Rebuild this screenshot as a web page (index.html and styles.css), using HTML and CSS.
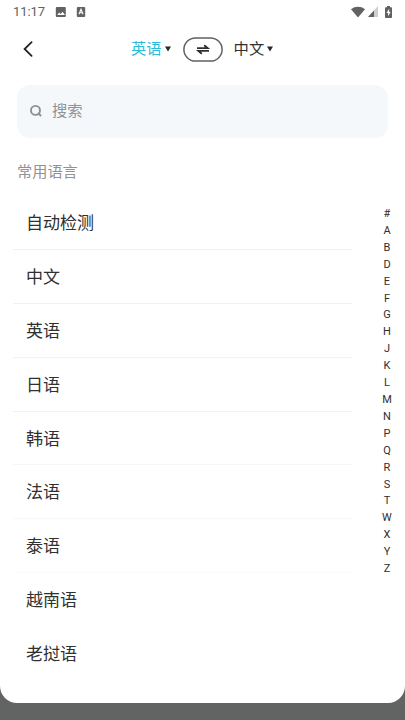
FILE: index.html
```html
<!DOCTYPE html>
<html lang="zh-CN">
<head>
<meta charset="utf-8">
<title>选择语言</title>
<link rel="stylesheet" href="styles.css">
</head>
<body>
<main class="sheet">
  <div class="status">
    <span class="time">11:17</span>
    <svg class="picture" width="12" height="12" viewBox="0 0 12 12"><rect x=".8" y="1" width="10" height="10" rx="1" fill="#626262"/><path d="M2.2 9l2-2.6 1.5 1.7L7.6 5.8 10 9z" fill="#fff"/></svg>
    <svg class="input-mode" width="10" height="12" viewBox="0 0 10 12"><rect x=".8" y="1" width="8.4" height="10" rx="1" fill="#626262"/><path d="M3 8.3L5 3.3l2.1 5M3.7 6.7h2.7" fill="none" stroke="#fff" stroke-width="1.1"/></svg>
    <svg class="wifi" width="14" height="12" viewBox="0 0 14 12"><path d="M0 3.2C4-.1 10-.1 14 3.2L7 11.4z" fill="#626262"/></svg>
    <svg class="signal" width="10" height="11" viewBox="0 0 10 11"><path d="M10 0v11H0z" fill="#cfcfcf"/><path d="M6 4.4V11H0z" fill="#626262"/></svg>
    <svg class="battery" width="7" height="12" viewBox="0 0 7 12"><path d="M2 0h3v1.2h1.2q.8 0 .8.8v9q0 1-.8 1H.8Q0 12 0 11V2q0-.8.8-.8H2z" fill="#626262"/><path d="M4.2 2.8L1.5 7h1.6v3.2L5.6 6H4.2z" fill="#fff"/></svg>
  </div>
  <header class="header">
    <svg class="back" width="12" height="18" viewBox="0 0 12 18"><path d="M9.6 2.2L2.6 9l7 6.8" fill="none" stroke="#222" stroke-width="1.8" stroke-linecap="round"/></svg>
    <span class="lang active">英语</span>
    <svg class="caret" width="6" height="6" viewBox="0 0 6 6"><path d="M0 .5h6L3 5.5z" fill="#282828"/></svg>
    <button class="swap" aria-label="交换语言"><svg width="40" height="25" viewBox="0 0 40 25"><rect x=".9" y=".9" width="38.2" height="23.2" rx="11.6" fill="#fff" stroke="#606060" stroke-width="1.5"/><path d="M14 11.1h10.6L21.2 8.2M26 13.9H15.4l3.4 2.9" fill="none" stroke="#303030" stroke-width="1.9"/></svg></button>
    <span class="lang">中文</span>
    <svg class="caret" width="6" height="6" viewBox="0 0 6 6"><path d="M0 .5h6L3 5.5z" fill="#282828"/></svg>
  </header>
  <div class="search">
    <svg width="14" height="14" viewBox="0 0 14 14"><circle cx="6.5" cy="6.4" r="4.5" fill="none" stroke="#8c9094" stroke-width="1.9"/><path d="M9 9l3.1 3" stroke="#8c9094" stroke-width="1.9"/></svg>
    <span>搜索</span>
  </div>
  <h2 class="title">常用语言</h2>
  <div class="content">
    <ul class="languages">
      <li>自动检测</li><li>中文</li><li>英语</li><li>日语</li><li>韩语</li><li>法语</li><li>泰语</li><li>越南语</li><li>老挝语</li>
    </ul>
    <nav class="index">
      <span>#</span><span>A</span><span>B</span><span>D</span><span>E</span><span>F</span><span>G</span><span>H</span><span>J</span><span>K</span><span>L</span><span>M</span><span>N</span><span>P</span><span>Q</span><span>R</span><span>S</span><span>T</span><span>W</span><span>X</span><span>Y</span><span>Z</span>
    </nav>
  </div>
</main>
</body>
</html>
```
FILE: styles.css
```css
* { box-sizing: border-box; }
body {
  margin: 0;
  height: 720px;
  overflow: hidden;
  background: #626463;
  color: #303030;
  font-family: Roboto, "Noto Sans CJK SC", sans-serif;
}
.sheet {
  height: 703px;
  background: #fff;
  border-radius: 0 0 17px 17px;
}
.status {
  display: flex;
  align-items: center;
  height: 23px;
  padding: 0 13px 0 13px;
}
.time { width: 42px; color: #626262; font-size: 13px; letter-spacing: -.1px; }
.input-mode { margin-left: 9px; }
.wifi { margin-left: auto; }
.signal { margin-left: 3px; }
.battery { margin-left: 7px; }
.header {
  display: flex;
  align-items: center;
  height: 52px;
  padding-left: 22px;
}
.back { margin-right: 97px; }
.lang { font-size: 15.3px; line-height: 24px; }
.active { color: #2cbcda; }
.caret { margin-left: 3px; }
.swap {
  display: flex;
  width: 40px;
  height: 25px;
  margin: 0 11px 0 12px;
  padding: 0;
  border: 0;
  background: none;
}
.search {
  display: flex;
  align-items: center;
  gap: 9px;
  height: 53px;
  margin: 10px 17px 0;
  padding: 0 0 1px 12px;
  border-radius: 13px;
  background: #f4f8fb;
  color: #909396;
  font-size: 15.3px;
}
.search span { padding-bottom: 4px; }
.title {
  height: 58px;
  margin: 0;
  padding: 23px 0 0 17px;
  color: #929292;
  font-size: 15.2px;
  line-height: 22px;
  font-weight: 400;
}
.content {
  display: flex;
  justify-content: space-between;
}
.languages {
  width: 339px;
  margin: 0 0 0 13px;
  padding: 0;
  list-style: none;
}
.languages li {
  height: 53.9px;
  padding-left: 13px;
  border-bottom: 1px solid #f2f2f2;
  font-size: 17px;
  line-height: 54px;
}
.languages li:nth-child(n+5) { border-color: #f7f7f7; }
.languages li:nth-child(7) { border-color: #fbfbfb; }
.languages li:nth-child(n+8) { border-color: transparent; }
.index {
  display: flex;
  flex-direction: column;
  width: 36px;
  padding-top: 10px;
  font-size: 11px;
  line-height: 16.9px;
  text-align: center;
}
```
